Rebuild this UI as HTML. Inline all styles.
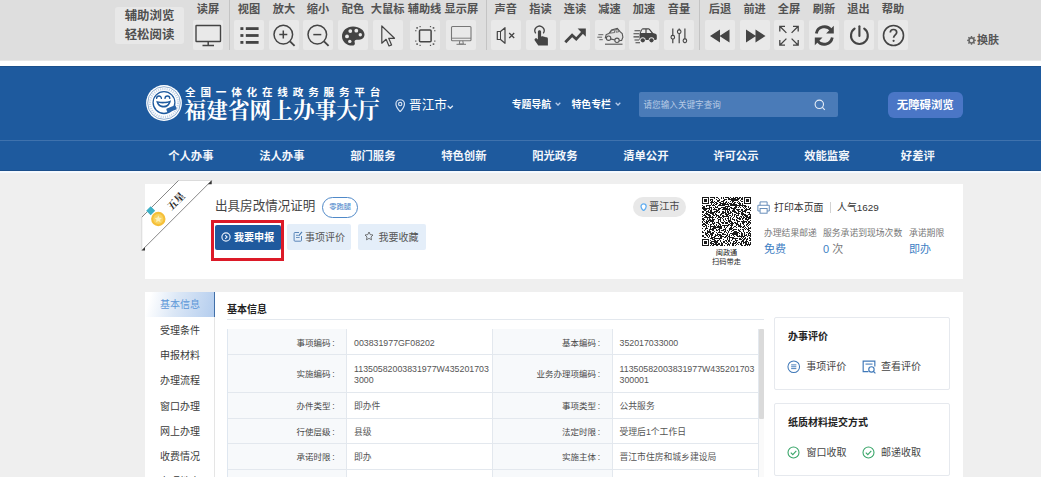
<!DOCTYPE html>
<html lang="zh-CN">
<head>
<meta charset="utf-8">
<title>出具房改情况证明 - 福建省网上办事大厅</title>
<style>
*{box-sizing:border-box;margin:0;padding:0}
html,body{width:1041px;height:477px;overflow:hidden;background:#efefef;font-family:"Liberation Sans","Noto Sans CJK SC",sans-serif;color:#333}
.abs{position:absolute}
#page{position:relative;width:1041px;height:477px;overflow:hidden}
/* ---------- accessibility toolbar ---------- */
#tb{position:absolute;left:0;top:0;width:1041px;height:61px;background:linear-gradient(to bottom,#dedede 0,#dedede 60.2px,#fff 61.2px)}
#tbw{position:absolute;left:0;top:61px;width:1041px;height:6px;background:#fff}
.tbbox{position:absolute;left:115px;top:7px;width:69px;height:37px;background:#e8e8e8;border-radius:3px;font-size:12.400px;font-weight:bold;color:#505050;text-align:center;line-height:19px;padding-top:0}
.tl{position:absolute;top:1.8px;width:50px;margin-left:-25px;text-align:center;font-size:11.2px;font-weight:bold;color:#525252;line-height:15px;white-space:nowrap}
.tbn{position:absolute;top:20.300px;width:30px;height:29.500px;margin-left:-15px;background:#e9e9e9;border-radius:2px}
.tbn svg{position:absolute;left:0;top:0.200px;width:30px;height:30px}
.tsep{position:absolute;top:0;width:1px;height:50px;background:#c4c4c4}
.skin{position:absolute;left:977px;top:33px;font-size:11px;font-weight:bold;color:#555;line-height:15px;white-space:nowrap}
/* ---------- header ---------- */
#hd{position:absolute;left:0;top:66px;width:1041px;height:105px;background:#1e5a9e}
#hdline{position:absolute;left:0;top:73.6px;width:1041px;height:1px;background:#3f72ad}
.logo{position:absolute;left:146px;top:18px;width:35px;height:35px}
.t1{position:absolute;left:185px;top:19.8px;font-size:10.6px;font-weight:bold;color:#fff;line-height:13px;white-space:nowrap}
.t2{position:absolute;left:184px;top:31px;font-family:"Liberation Serif","Noto Serif CJK SC",serif;font-size:21.6px;font-weight:bold;color:#fff;line-height:24px;white-space:nowrap;letter-spacing:0.1px}
.loc{position:absolute;left:409px;top:30.400px;font-size:12.650px;color:#fff;line-height:18px;white-space:nowrap}
.hn{position:absolute;top:31px;font-size:9.850px;font-weight:bold;color:#fff;line-height:16px;white-space:nowrap}
.sbox{position:absolute;left:639px;top:26.300px;width:198.500px;height:25.200px;background:#4a7bb8;border-radius:2px}
.sbox span{position:absolute;left:4.500px;top:5.500px;font-size:8.6px;color:#b9cce6;line-height:14px;white-space:nowrap}
.wza{position:absolute;left:887.500px;top:25.500px;width:75.500px;height:26.800px;background:#4a76c6;border-radius:6px;color:#fff;font-size:11.4px;font-weight:bold;text-align:center;line-height:27px;white-space:nowrap}
.nv{position:absolute;top:81px;width:80px;margin-left:-39.200px;text-align:center;font-size:11.350px;font-weight:bold;color:#f3f6fb;line-height:18px;white-space:nowrap}
/* ---------- cards ---------- */
#c1{position:absolute;left:145px;top:184px;width:817.800px;height:95px;background:#fff}
#c2{position:absolute;left:145px;top:292px;width:817.800px;height:200px;background:#fff}
.ttl{position:absolute;left:215px;top:197px;font-size:12.550px;color:#444;line-height:18px;white-space:nowrap}
.pill{position:absolute;left:322px;top:197.400px;width:36.300px;height:20.300px;border:1px solid #5089c8;border-radius:10.500px;color:#3f80c8;font-size:7.300px;text-align:center;line-height:18.600px;white-space:nowrap}
.red{position:absolute;left:211px;top:219.500px;width:73.200px;height:41.500px;border:3px solid #dc1a28}
.b1{position:absolute;left:215px;top:224.500px;width:65.800px;height:25px;background:#1f5a9e;border-radius:2px;color:#fff;font-size:10.050px;font-weight:bold;line-height:26px;white-space:nowrap}
.b2{position:absolute;top:224px;height:26px;background:#e4eef9;border-radius:2px;color:#555;font-size:10px;line-height:27.400px;white-space:nowrap}
.lp{position:absolute;left:632.500px;top:196.600px;width:53px;height:20px;background:#e8e8e8;border-radius:10px;color:#484848;font-size:10.200px;line-height:20.400px;white-space:nowrap}
.sm{position:absolute;font-size:8.8px;color:#777;line-height:12px;white-space:nowrap}
.val{position:absolute;font-size:11px;color:#4080c4;line-height:14px;white-space:nowrap}
.pr{position:absolute;top:201px;font-size:9.900px;color:#333;line-height:14px;white-space:nowrap}
.qt{position:absolute;left:696.500px;width:60px;text-align:center;font-size:7.200px;color:#1c1c1c;line-height:8px;white-space:nowrap}
/* sidebar */
.sd{position:absolute;left:145px;width:68px;height:25px;font-size:10px;color:#3a3a3a;line-height:25px;padding-left:15px;white-space:nowrap}
.sd.on{background:linear-gradient(105deg,#fff 8%,#dbe7f6 45%,#b4cdee 100%);border-right:1.400px solid #416fa8;color:#5b96d8;height:24.600px;line-height:26px;width:69.500px}
.vline{position:absolute;left:213.500px;top:292px;width:1px;height:186px;background:#e5e5e5}
.h3{position:absolute;font-size:10px;font-weight:bold;color:#222;line-height:14px;white-space:nowrap}
/* table */
.tc{position:absolute;border-right:1px solid #e3e8ee;border-bottom:1px solid #e3e8ee;font-size:8.8px;color:#555;line-height:11px;display:flex;align-items:center}
.tc.l{background:#f7f9fb;justify-content:flex-end;padding-right:11.500px;padding-top:3px;color:#484848;font-size:8.500px;white-space:nowrap}
.tc.v{background:#fff;padding-left:7px;padding-right:0;padding-top:3px;font-size:8.800px;white-space:nowrap}
.bx{position:absolute;left:774px;width:176px;border:1px solid #e6e9ee;border-radius:2px;background:#fff}
.it{position:absolute;font-size:10px;color:#444;line-height:14px;white-space:nowrap}
</style>
</head>
<body>
<div id="page">

<!-- ================= toolbar ================= -->
<div id="tb">
  <div class="tbbox">辅助浏览<br>轻松阅读</div>
  <!--TB-->
  <div class="tl" style="left:208px">读屏</div><div class="tbn" style="left:208px"><svg viewBox="0 0 30 30"><rect x="3" y="5.5" width="24.5" height="16" rx="0.5" stroke="#444" fill="none" stroke-width="1.4"/><path d="M15.2 21.5v3.6M9.5 25.4h11.5" stroke="#444" fill="none" stroke-width="1.5"/></svg></div>
  <div class="tl" style="left:249px">视图</div><div class="tbn" style="left:249px"><svg viewBox="0 0 30 30"><g fill="#444"><rect x="6.400" y="7.200" width="3" height="2.800"/><rect x="6.400" y="14.100" width="3" height="2.800"/><rect x="6.400" y="21" width="3" height="2.800"/><rect x="11.800" y="7.200" width="12.800" height="2.800"/><rect x="11.800" y="14.100" width="12.800" height="2.800"/><rect x="11.800" y="21" width="12.800" height="2.800"/></g></svg></div>
  <div class="tl" style="left:284px">放大</div><div class="tbn" style="left:284px"><svg viewBox="0 0 30 30"><circle cx="14.3" cy="14.6" r="9.3" stroke="#444" fill="none" stroke-width="1.5"/><path d="M21 21.3l4.6 4.6" stroke="#444" fill="none" stroke-width="1.8"/><path d="M10.3 14.6h8M14.3 10.6v8" stroke="#444" fill="none" stroke-width="1.5"/></svg></div>
  <div class="tl" style="left:318px">缩小</div><div class="tbn" style="left:318px"><svg viewBox="0 0 30 30"><circle cx="14.3" cy="14.6" r="9.3" stroke="#444" fill="none" stroke-width="1.5"/><path d="M21 21.3l4.6 4.6" stroke="#444" fill="none" stroke-width="1.8"/><path d="M10.3 14.6h8" stroke="#444" fill="none" stroke-width="1.5"/></svg></div>
  <div class="tl" style="left:353px">配色</div><div class="tbn" style="left:353px"><svg viewBox="0 0 30 30"><g transform="translate(0 0.9)"><path fill="#444" d="M15 5.5C8.8 5.5 4 9.9 4 15.3c0 5.3 4.600 9.400 10.200 9.400 1.800 0 2.700-.9 2.700-2.100 0-.7-.4-1.200-.4-1.900 0-1.100.9-1.900 2.100-1.900h2.600c3.100 0 5.300-2.200 5.300-5.100C26.500 9.100 21.400 5.500 15 5.500z"/><g fill="#e9e9e9"><circle cx="9" cy="15.500" r="1.900"/><circle cx="12.300" cy="10.200" r="1.900"/><circle cx="18.300" cy="9.800" r="1.900"/><circle cx="22.300" cy="13.800" r="1.700"/><circle cx="11.800" cy="20.500" r="1.700"/></g></g></svg></div>
  <div class="tl" style="left:387.6px">大鼠标</div><div class="tbn" style="left:387.6px"><svg viewBox="0 0 30 30"><g transform="translate(0 0.5)"><path d="M8.8 5.5v17.2l4.3-3.9 2.900 6.700 2.600-1.100-2.900-6.600h5.800z" stroke="#444" fill="none" stroke-width="1.2" stroke-linejoin="round"/></g></svg></div>
  <div class="tl" style="left:424.5px">辅助线</div><div class="tbn" style="left:424.5px"><svg viewBox="0 0 30 30"><g transform="translate(0 0.6)"><rect x="9.5" y="9.500" width="11.600" height="11.600" rx="1" stroke="#444" fill="none" stroke-width="1.500"/><g fill="#555"><rect x="6.300" y="6.500" width="1.600" height="1.600"/><rect x="22.700" y="6.500" width="1.600" height="1.600"/><rect x="6.300" y="22.700" width="1.600" height="1.600"/><rect x="22.700" y="22.700" width="1.600" height="1.600"/><rect x="9.500" y="5.400" width="1.200" height="1.200"/><rect x="19.900" y="5.400" width="1.200" height="1.200"/><rect x="9.500" y="24.200" width="1.200" height="1.200"/><rect x="19.900" y="24.200" width="1.200" height="1.200"/><rect x="5.200" y="9.500" width="1.200" height="1.200"/><rect x="5.200" y="19.900" width="1.200" height="1.200"/><rect x="24.200" y="9.500" width="1.200" height="1.200"/><rect x="24.200" y="19.900" width="1.200" height="1.200"/></g></g></svg></div>
  <div class="tl" style="left:461.4px">显示屏</div><div class="tbn" style="left:461.4px"><svg viewBox="0 0 30 30"><rect x="5.500" y="6.500" width="19.500" height="14.300" rx="1" stroke="#777" fill="none" stroke-width="1.100"/><path d="M5.500 18.200h19.500" stroke="#777" stroke-width="0.900"/><path d="M13.800 20.800l-.5 3.200h4l-.5-3.200M10.500 24.300h9.500" stroke="#777" fill="none" stroke-width="1"/></svg></div>
  <div class="tl" style="left:505.7px">声音</div><div class="tbn" style="left:505.7px"><svg viewBox="0 0 30 30"><path d="M6.300 11.500h3.200l4.500-3.800v15.600l-4.500-3.800H6.300z" stroke="#444" fill="none" stroke-width="1.200" stroke-linejoin="round"/><path d="M9.500 11.500v8" stroke="#444" fill="none" stroke-width="1"/><path d="M18.200 13l5 5M23.200 13l-5 5" stroke="#444" fill="none" stroke-width="1.300"/></svg></div>
  <div class="tl" style="left:540.5px">指读</div><div class="tbn" style="left:540.5px"><svg viewBox="0 0 30 30"><path fill="#444" d="M13.500 10.200c.9 0 1.600.7 1.600 1.600v4.600l1.200-.1c.7-.3 1.500 0 1.800.6.600-.4 1.500-.2 1.900.5.700-.3 1.600.1 1.800.9l.1 1v6.200h-9.600l-3.500-5c-.5-.7-.3-1.600.4-2 .6-.400 1.400-.3 1.900.2l.8.9v-7.800c0-.9.700-1.600 1.600-1.600z"/><path d="M9.700 13.400a4.600 4.600 0 1 1 7.600 0" stroke="#444" fill="none" stroke-width="1.300"/></svg></div>
  <div class="tl" style="left:575px">连读</div><div class="tbn" style="left:575px"><svg viewBox="0 0 30 30"><path d="M5.300 22.300l6.800-7 4.100 3.800 6.500-7" stroke="#444" fill="none" stroke-width="2.800" stroke-linejoin="miter"/><path fill="#444" d="M17.600 8.500h8.200v8.200z"/></svg></div>
  <div class="tl" style="left:609.5px">减速</div><div class="tbn" style="left:609.5px"><svg viewBox="0 0 30 30"><g stroke="#555" fill="none" stroke-width="1.100"><path fill="#e2e2e2" d="M10.300 17.800l.9-3.200 2.700-1 2.600-3.700 5.800-1.500 3 3.500 1.900 1.600.7 3.600-1.300 3.300-3.200.4-8.200-1.900z"/><path d="M14.800 13.200l2-2.800 2.300-.6.700 2.700zM20.700 9.500l1.300-.3 2 2.400-2.600.7z" stroke-width="0.800"/><circle cx="13.600" cy="18.200" r="2.200" fill="#e9e9e9"/><circle cx="22" cy="20.300" r="2.200" fill="#e9e9e9"/><path d="M10 24.200h17.500"/><path d="M3.300 14.700h5M2.300 17.200h4.800M4.300 19.700h3.500" stroke-width="0.900"/></g></svg></div>
  <div class="tl" style="left:644px">加速</div><div class="tbn" style="left:644px"><svg viewBox="0 0 30 30"><path fill="#444" d="M10.500 13.300l2-4.100c.3-.6.900-1 1.600-1h5.300c.6 0 1.100.2 1.500.7l3.200 4 2.300.8c.9.3 1.400 1.100 1.400 2v3.100c0 .7-.5 1.200-1.200 1.200h-1.300a2.800 2.800 0 0 0-5.600 0h-3.100a2.800 2.800 0 0 0-5.600 0h-.5z"/><g fill="#444"><circle cx="13.800" cy="20.300" r="2.100"/><circle cx="22.500" cy="20.300" r="2.100"/></g><path fill="#e9e9e9" d="M13.300 9.500h3.100v3.500h-4.700zM17.600 9.500h2.200l2.700 3.500h-4.900z"/><path d="M5.500 10.700h6M4.500 13.800h5.500M4.500 16.900h5.500M5.500 20h4.500M6.500 22.800h4.500" stroke="#444" stroke-width="1.100" fill="none"/></svg></div>
  <div class="tl" style="left:679px">音量</div><div class="tbn" style="left:679px"><svg viewBox="0 0 30 30"><path d="M8.800 8.500v6.900M8.800 19.100v4.100M15.200 8.500v1.400M15.200 13.600v9.600M20.900 8.500v10.400M20.900 22.600v.6" stroke="#444" fill="none" stroke-width="1.200"/><circle cx="8.800" cy="17.200" r="1.800" stroke="#444" fill="none" stroke-width="1.100"/><circle cx="15.200" cy="11.700" r="1.800" stroke="#444" fill="none" stroke-width="1.100"/><circle cx="20.900" cy="20.700" r="1.800" stroke="#444" fill="none" stroke-width="1.100"/></svg></div>
  <div class="tl" style="left:720px">后退</div><div class="tbn" style="left:720px"><svg viewBox="0 0 30 30"><path fill="#444" d="M5 16l10-6.400v12.800zM14.500 16l10-6.400v12.800z"/></svg></div>
  <div class="tl" style="left:754.6px">前进</div><div class="tbn" style="left:754.6px"><svg viewBox="0 0 30 30"><path fill="#444" d="M25.500 16l-10 -6.400v12.800zM16 16l-10-6.400v12.800z"/></svg></div>
  <div class="tl" style="left:789px">全屏</div><div class="tbn" style="left:789px"><svg viewBox="0 0 30 30"><path d="M5.800 6.300l6.600 6.600M5.800 11.500V6.300H11M24.200 6.300l-6.600 6.600M19 6.300h5.200v5.200M5.800 25.200l6.600-6.600M5.800 20v5.200H11M24.200 25.200l-6.600-6.600M19 25.200h5.200V20" stroke="#444" fill="none" stroke-width="1.300"/></svg></div>
  <div class="tl" style="left:824px">刷新</div><div class="tbn" style="left:824px"><svg viewBox="0 0 30 30"><path d="M7.300 13.500a8.200 8.200 0 0 1 14.800-3.200M23.300 17.500a8.200 8.200 0 0 1-14.800 3.200" stroke="#444" fill="none" stroke-width="2.800"/><path fill="#444" d="M24.800 5.800v7.700h-7.700zM5.800 25.200v-7.700h7.700z"/></svg></div>
  <div class="tl" style="left:858.5px">退出</div><div class="tbn" style="left:858.5px"><svg viewBox="0 0 30 30"><path d="M10.600 8.700A8.400 8.400 0 1 0 20.200 8.700" stroke="#444" fill="none" stroke-width="2.100" stroke-linecap="round"/><path d="M15.400 6.300V16" stroke="#444" stroke-width="2.100" stroke-linecap="round"/></svg></div>
  <div class="tl" style="left:893px">帮助</div><div class="tbn" style="left:893px"><svg viewBox="0 0 30 30"><circle cx="15.500" cy="15.500" r="10" stroke="#444" fill="none" stroke-width="1.600"/><path d="M12.300 12.600c0-1.900 1.400-3.100 3.200-3.100s3.200 1.200 3.200 2.900c0 2.400-3.100 2.500-3.100 5.300" stroke="#444" fill="none" stroke-width="1.700"/><circle cx="15.600" cy="20.800" r="1.100" fill="#444"/></svg></div>
  <div class="tsep" style="left:228.5px"></div>
  <div class="tsep" style="left:485.5px"></div>
  <div class="tsep" style="left:699.3px"></div>
  <!--/TB-->
  <svg class="abs" viewBox="0 0 20 20" style="left:967px;top:36px;width:9px;height:9px"><path fill="#666" d="M10 6.200a3.800 3.800 0 1 0 0 7.600 3.800 3.800 0 0 0 0-7.600zM8.600 0h2.800l.5 2.700 1.700.7L15.900 1.800l2 2-1.600 2.300.7 1.700 2.700.5v2.800l-2.700.5-.7 1.700 1.600 2.300-2 2-2.300-1.600-1.700.7-.5 2.700H8.600l-.5-2.700-1.700-.7-2.300 1.600-2-2 1.600-2.300-.7-1.700L.3 11.100V8.300L3 7.800l.7-1.700L2.100 3.800l2-2 2.300 1.600 1.700-.7z" fill-rule="evenodd"/></svg>
  <div class="skin">换肤</div>
</div>
<div id="tbw"></div>

<!-- ================= header ================= -->
<div id="hd">
  <div class="abs" style="left:0;top:0;width:1041px;height:1px;background:#1a508c"></div>
  <div id="hdline"></div>
  <div class="abs" style="left:0;top:104px;width:1041px;height:1px;background:#1b4f8b"></div>
  <div class="abs" style="left:0;top:105px;width:1041px;height:2px;background:#f5f9fe"></div>
  <div class="t1" style="letter-spacing:4.8px">全国一体化在线政务服务平台</div>
  <svg class="logo" viewBox="0 0 36 36" style="left:146.2px;top:18.5px;width:36px;height:36px">
<circle cx="18" cy="18" r="17.9" fill="#fff"/>
<circle cx="18" cy="18" r="16.3" fill="none" stroke="#1f5a9e" stroke-width="0.5"/>
<circle cx="18" cy="18" r="14" fill="none" stroke="#c3d3e8" stroke-width="2.200" stroke-dasharray="1.100 1.100"/>
<circle cx="18" cy="17.6" r="10.9" fill="#fff" stroke="#1f5a9e" stroke-width="1.3"/>
<path d="M10.600 13.400a2.400 2.400 0 0 1 4.800 0M19 13.400a2.400 2.400 0 0 1 4.800 0" fill="none" stroke="#1f5a9e" stroke-width="1.300" stroke-linecap="round"/>
<path d="M10.300 15.800c2.200 1.500 11.800 1.500 14.600-.6-.4 4.600-3.500 7.400-7.300 7.400-3.900 0-6.800-2.800-7.300-6.800z" fill="#1f5a9e"/>
<path d="M12.400 17.800c2.600.9 7.600.8 10.300-.3-.9 2.100-2.900 3.300-5.200 3.300-2.300 0-4.200-1.200-5.100-3z" fill="#fff"/>
<rect x="20.500" y="21.800" width="10" height="4.300" rx="1" fill="#2a64a8" transform="rotate(-22 25.500 24)"/>
</svg>
<div class="t2" style="left:184.500px;top:32.600px">福建省网上办事大厅</div>
  <svg class="abs" viewBox="0 0 10 13" style="left:395.300px;top:32.800px;width:10.400px;height:13.500px"><path d="M5 .7a4.100 4.100 0 0 0-4.100 4.100c0 3 4.100 7.400 4.100 7.400s4.100-4.400 4.100-7.400A4.100 4.100 0 0 0 5 .7z" fill="none" stroke="#d6e2f3" stroke-width="1.150"/><circle cx="5" cy="4.900" r="1.600" fill="none" stroke="#d6e2f3" stroke-width="1.100"/></svg>
<svg class="abs" viewBox="0 0 7 5" style="left:447px;top:38.800px;width:6.600px;height:4.700px"><path d="M.8.800l2.700 2.700L6.200.8" fill="none" stroke="#dfe8f4" stroke-width="1.400"/></svg>
<svg class="abs" viewBox="0 0 7 5" style="left:555px;top:36px;width:6px;height:4.300px"><path d="M.8.800l2.700 2.700L6.200.8" fill="none" stroke="#b3c9e8" stroke-width="1.500"/></svg>
<svg class="abs" viewBox="0 0 7 5" style="left:614.500px;top:36px;width:6px;height:4.300px"><path d="M.8.800l2.700 2.700L6.200.8" fill="none" stroke="#b3c9e8" stroke-width="1.500"/></svg>

  <div class="loc">晋江市</div>
  <div class="hn" style="left:511.700px">专题导航</div>
  <div class="hn" style="left:571.500px">特色专栏</div>
  <div class="sbox"><span>请您输入关键字查询</span></div>
  <svg class="abs" viewBox="0 0 12 12" style="left:813.500px;top:33px;width:12px;height:12px"><circle cx="5.300" cy="5.300" r="4.200" fill="none" stroke="#e8eff8" stroke-width="1.100"/><path d="M8.400 8.400l2.400 2.400" stroke="#e8eff8" stroke-width="1.100"/></svg>
  <div class="wza">无障碍浏览</div>
  <div class="nv" style="left:190px">个人办事</div>
  <div class="nv" style="left:281px">法人办事</div>
  <div class="nv" style="left:372px">部门服务</div>
  <div class="nv" style="left:463px">特色创新</div>
  <div class="nv" style="left:554px">阳光政务</div>
  <div class="nv" style="left:645px">清单公开</div>
  <div class="nv" style="left:735px">许可公示</div>
  <div class="nv" style="left:826px">效能监察</div>
  <div class="nv" style="left:917px">好差评</div>
</div>

<!-- ================= card 1 ================= -->
<div id="c1"></div>
<svg class="abs" viewBox="0 0 76 76" style="left:140px;top:178px;width:76px;height:76px">
<path d="M38.500 2.500H71.700L1.800 72.400V39.200z" fill="#fff"/>
<path d="M38.500 2.500H71.500M1.800 39.200V72.200" fill="none" stroke="#cfcfcf" stroke-width="0.700"/>
<path d="M1.800 39.200L38.500 2.500M71.700 2.500L1.800 72.400" fill="none" stroke="#555" stroke-width="0.700"/>
<path d="M67.900 6.300h3.800V2.500zM5 69.200v3.200H1.800z" fill="#333"/>
<path d="M15.200 32.700l-4.500 4.500-4.500-4.500 4.500-4.500z" fill="#3db0c6"/>
<circle cx="18.300" cy="41" r="7.200" fill="#f5bf38"/><circle cx="18.300" cy="41" r="5.100" fill="#f9d35e"/>
<path d="M18.300 37.400l1.100 2.300 2.500.3-1.800 1.800.4 2.500-2.200-1.200-2.200 1.200.4-2.500-1.800-1.800 2.500-.3z" fill="#fdf0b8"/>
<g transform="translate(35.900 23) rotate(-45) translate(-10.100 -4.900)"><text x="0" y="8.700" font-size="10" font-weight="bold" fill="#222" font-family="'Liberation Serif','Noto Serif CJK SC',serif">五星</text></g>
</svg>
<div class="ttl">出具房改情况证明</div>
<div class="pill">零跑腿</div>
<div class="red"></div>
<div class="b1"><span style="margin-left:19px">我要申报</span></div>
<div class="b2" style="left:287px;width:64px"><span style="margin-left:18px">事项评价</span></div>
<div class="b2" style="left:358px;width:68px"><span style="margin-left:20.600px">我要收藏</span></div>
<svg class="abs" viewBox="0 0 10 10" style="left:220.500px;top:232.300px;width:10px;height:10px"><circle cx="5" cy="5" r="4.100" fill="none" stroke="#e8f0fa" stroke-width="1.150"/><path d="M4.200 3.100l1.900 1.900-1.900 1.900" fill="none" stroke="#e8f0fa" stroke-width="1.150"/></svg>
<svg class="abs" viewBox="0 0 10 11" style="left:292.500px;top:231.300px;width:10px;height:11px"><path d="M6 1.500H2a.9.900 0 0 0-.9.900v6.900a.9.900 0 0 0 .9.900h5.600a.9.900 0 0 0 .9-.9V5" fill="none" stroke="#4c7cb2" stroke-width="0.900"/><path d="M3 4.300h2.300M3 6.500h3.600" stroke="#4c7cb2" stroke-width="0.800"/><path d="M5.700 4.800L9 .9" stroke="#4c7cb2" stroke-width="1.100"/></svg>
<svg class="abs" viewBox="0 0 10 10" style="left:364.400px;top:231.300px;width:10px;height:10px"><path d="M5 1l1.200 2.600 2.800.4-2 2 .5 2.800L5 7.400 2.500 8.800 3 6 1 4l2.800-.4z" fill="none" stroke="#555" stroke-width="0.800" stroke-linejoin="round"/></svg>

<div class="lp"><span style="margin-left:16.500px">晋江市</span></div>
<svg class="abs" viewBox="0 0 8 10" style="left:640.200px;top:202.500px;width:7.200px;height:8.600px"><path d="M4 1A3 3 0 0 0 1 4c0 2.200 3 5 3 5s3-2.800 3-5A3 3 0 0 0 4 1z" fill="#fff" stroke="#62aef0" stroke-width="1.500"/></svg>
<svg class="abs" viewBox="0 0 49 49" style="left:702px;top:197px;width:49px;height:49.500px" shape-rendering="crispEdges"><rect width="49" height="49" fill="#fff"/><path fill="#1a1a1a" d="M0 0h7v1h-7zM8 0h5v1h-5zM14 0h2v1h-2zM19 0h1v1h-1zM21 0h1v1h-1zM23 0h4v1h-4zM28 0h1v1h-1zM31 0h1v1h-1zM33 0h3v1h-3zM37 0h2v1h-2zM40 0h1v1h-1zM42 0h7v1h-7zM0 1h1v1h-1zM6 1h1v1h-1zM12 1h1v1h-1zM16 1h1v1h-1zM19 1h1v1h-1zM21 1h1v1h-1zM26 1h2v1h-2zM29 1h5v1h-5zM35 1h3v1h-3zM39 1h2v1h-2zM42 1h1v1h-1zM48 1h1v1h-1zM0 2h1v1h-1zM2 2h3v1h-3zM6 2h1v1h-1zM8 2h3v1h-3zM14 2h1v1h-1zM17 2h1v1h-1zM22 2h3v1h-3zM26 2h11v1h-11zM39 2h2v1h-2zM42 2h1v1h-1zM44 2h3v1h-3zM48 2h1v1h-1zM0 3h1v1h-1zM2 3h3v1h-3zM6 3h1v1h-1zM8 3h1v1h-1zM10 3h1v1h-1zM15 3h3v1h-3zM21 3h2v1h-2zM29 3h7v1h-7zM38 3h1v1h-1zM42 3h1v1h-1zM44 3h3v1h-3zM48 3h1v1h-1zM0 4h1v1h-1zM2 4h3v1h-3zM6 4h1v1h-1zM9 4h2v1h-2zM12 4h1v1h-1zM15 4h2v1h-2zM19 4h3v1h-3zM24 4h1v1h-1zM28 4h1v1h-1zM30 4h2v1h-2zM36 4h1v1h-1zM39 4h2v1h-2zM42 4h1v1h-1zM44 4h3v1h-3zM48 4h1v1h-1zM0 5h1v1h-1zM6 5h1v1h-1zM8 5h4v1h-4zM13 5h2v1h-2zM17 5h2v1h-2zM21 5h1v1h-1zM23 5h2v1h-2zM26 5h1v1h-1zM30 5h1v1h-1zM32 5h2v1h-2zM35 5h1v1h-1zM37 5h1v1h-1zM42 5h1v1h-1zM48 5h1v1h-1zM0 6h7v1h-7zM9 6h1v1h-1zM12 6h1v1h-1zM14 6h2v1h-2zM18 6h6v1h-6zM25 6h1v1h-1zM27 6h3v1h-3zM31 6h2v1h-2zM36 6h3v1h-3zM40 6h1v1h-1zM42 6h7v1h-7zM9 7h1v1h-1zM11 7h1v1h-1zM13 7h2v1h-2zM17 7h2v1h-2zM20 7h7v1h-7zM28 7h7v1h-7zM37 7h2v1h-2zM40 7h1v1h-1zM0 8h1v1h-1zM4 8h5v1h-5zM10 8h3v1h-3zM16 8h7v1h-7zM26 8h1v1h-1zM28 8h16v1h-16zM1 9h2v1h-2zM4 9h1v1h-1zM7 9h1v1h-1zM13 9h1v1h-1zM15 9h1v1h-1zM23 9h5v1h-5zM33 9h2v1h-2zM37 9h1v1h-1zM40 9h1v1h-1zM42 9h3v1h-3zM46 9h1v1h-1zM0 10h3v1h-3zM7 10h3v1h-3zM11 10h1v1h-1zM13 10h3v1h-3zM19 10h5v1h-5zM25 10h1v1h-1zM28 10h2v1h-2zM32 10h3v1h-3zM36 10h1v1h-1zM38 10h1v1h-1zM41 10h1v1h-1zM43 10h1v1h-1zM46 10h1v1h-1zM48 10h1v1h-1zM0 11h8v1h-8zM9 11h1v1h-1zM12 11h1v1h-1zM16 11h3v1h-3zM21 11h5v1h-5zM27 11h1v1h-1zM29 11h5v1h-5zM42 11h1v1h-1zM44 11h1v1h-1zM47 11h2v1h-2zM1 12h4v1h-4zM7 12h1v1h-1zM9 12h1v1h-1zM11 12h4v1h-4zM16 12h2v1h-2zM20 12h8v1h-8zM31 12h2v1h-2zM34 12h4v1h-4zM39 12h2v1h-2zM43 12h5v1h-5zM2 13h2v1h-2zM6 13h1v1h-1zM8 13h2v1h-2zM14 13h3v1h-3zM23 13h1v1h-1zM25 13h1v1h-1zM27 13h1v1h-1zM30 13h3v1h-3zM35 13h2v1h-2zM39 13h2v1h-2zM42 13h3v1h-3zM48 13h1v1h-1zM0 14h2v1h-2zM4 14h3v1h-3zM8 14h2v1h-2zM12 14h4v1h-4zM17 14h1v1h-1zM20 14h2v1h-2zM23 14h1v1h-1zM25 14h2v1h-2zM28 14h1v1h-1zM30 14h4v1h-4zM36 14h3v1h-3zM40 14h4v1h-4zM0 15h2v1h-2zM4 15h1v1h-1zM6 15h7v1h-7zM14 15h1v1h-1zM16 15h2v1h-2zM20 15h4v1h-4zM25 15h2v1h-2zM28 15h2v1h-2zM32 15h3v1h-3zM36 15h1v1h-1zM39 15h2v1h-2zM43 15h1v1h-1zM45 15h3v1h-3zM3 16h3v1h-3zM8 16h4v1h-4zM13 16h1v1h-1zM19 16h3v1h-3zM23 16h2v1h-2zM26 16h3v1h-3zM30 16h1v1h-1zM34 16h4v1h-4zM39 16h3v1h-3zM47 16h1v1h-1zM0 17h1v1h-1zM2 17h1v1h-1zM4 17h4v1h-4zM10 17h2v1h-2zM13 17h2v1h-2zM18 17h2v1h-2zM23 17h4v1h-4zM30 17h1v1h-1zM32 17h2v1h-2zM36 17h1v1h-1zM39 17h5v1h-5zM46 17h3v1h-3zM1 18h3v1h-3zM6 18h3v1h-3zM11 18h2v1h-2zM14 18h3v1h-3zM18 18h1v1h-1zM20 18h2v1h-2zM24 18h2v1h-2zM27 18h2v1h-2zM30 18h1v1h-1zM32 18h1v1h-1zM34 18h3v1h-3zM40 18h1v1h-1zM42 18h4v1h-4zM48 18h1v1h-1zM0 19h1v1h-1zM3 19h2v1h-2zM7 19h2v1h-2zM10 19h1v1h-1zM14 19h1v1h-1zM16 19h2v1h-2zM20 19h7v1h-7zM29 19h1v1h-1zM32 19h1v1h-1zM34 19h1v1h-1zM38 19h2v1h-2zM41 19h1v1h-1zM43 19h3v1h-3zM47 19h2v1h-2zM2 20h10v1h-10zM13 20h1v1h-1zM16 20h4v1h-4zM21 20h1v1h-1zM26 20h1v1h-1zM28 20h1v1h-1zM31 20h1v1h-1zM34 20h2v1h-2zM37 20h1v1h-1zM39 20h1v1h-1zM41 20h2v1h-2zM44 20h5v1h-5zM0 21h2v1h-2zM5 21h1v1h-1zM7 21h1v1h-1zM10 21h1v1h-1zM15 21h1v1h-1zM18 21h1v1h-1zM20 21h1v1h-1zM23 21h1v1h-1zM25 21h2v1h-2zM28 21h1v1h-1zM30 21h1v1h-1zM35 21h4v1h-4zM40 21h2v1h-2zM43 21h2v1h-2zM46 21h3v1h-3zM0 22h3v1h-3zM5 22h1v1h-1zM7 22h2v1h-2zM10 22h3v1h-3zM16 22h3v1h-3zM21 22h1v1h-1zM23 22h1v1h-1zM26 22h1v1h-1zM28 22h1v1h-1zM30 22h3v1h-3zM34 22h1v1h-1zM37 22h2v1h-2zM40 22h1v1h-1zM43 22h4v1h-4zM1 23h1v1h-1zM4 23h1v1h-1zM6 23h6v1h-6zM16 23h1v1h-1zM18 23h1v1h-1zM21 23h1v1h-1zM24 23h1v1h-1zM26 23h3v1h-3zM32 23h1v1h-1zM34 23h2v1h-2zM41 23h1v1h-1zM45 23h1v1h-1zM48 23h1v1h-1zM0 24h1v1h-1zM2 24h1v1h-1zM4 24h3v1h-3zM8 24h4v1h-4zM16 24h1v1h-1zM18 24h1v1h-1zM22 24h1v1h-1zM26 24h4v1h-4zM35 24h3v1h-3zM39 24h6v1h-6zM46 24h2v1h-2zM0 25h1v1h-1zM3 25h3v1h-3zM7 25h1v1h-1zM10 25h1v1h-1zM12 25h1v1h-1zM14 25h3v1h-3zM19 25h3v1h-3zM23 25h3v1h-3zM27 25h1v1h-1zM29 25h2v1h-2zM32 25h2v1h-2zM35 25h1v1h-1zM40 25h3v1h-3zM44 25h1v1h-1zM46 25h3v1h-3zM1 26h2v1h-2zM4 26h2v1h-2zM10 26h3v1h-3zM16 26h2v1h-2zM20 26h2v1h-2zM23 26h3v1h-3zM28 26h4v1h-4zM33 26h3v1h-3zM38 26h1v1h-1zM40 26h2v1h-2zM45 26h2v1h-2zM48 26h1v1h-1zM0 27h4v1h-4zM6 27h1v1h-1zM8 27h2v1h-2zM11 27h1v1h-1zM14 27h1v1h-1zM17 27h2v1h-2zM26 27h2v1h-2zM29 27h2v1h-2zM34 27h3v1h-3zM38 27h1v1h-1zM41 27h1v1h-1zM44 27h2v1h-2zM47 27h1v1h-1zM0 28h1v1h-1zM3 28h2v1h-2zM8 28h1v1h-1zM12 28h1v1h-1zM14 28h1v1h-1zM16 28h1v1h-1zM18 28h1v1h-1zM20 28h7v1h-7zM28 28h3v1h-3zM34 28h1v1h-1zM36 28h3v1h-3zM42 28h1v1h-1zM44 28h1v1h-1zM46 28h1v1h-1zM1 29h2v1h-2zM4 29h1v1h-1zM6 29h1v1h-1zM8 29h6v1h-6zM15 29h5v1h-5zM22 29h1v1h-1zM25 29h1v1h-1zM29 29h1v1h-1zM32 29h2v1h-2zM36 29h4v1h-4zM41 29h2v1h-2zM45 29h1v1h-1zM4 30h1v1h-1zM8 30h1v1h-1zM11 30h9v1h-9zM22 30h1v1h-1zM24 30h1v1h-1zM28 30h2v1h-2zM31 30h1v1h-1zM34 30h1v1h-1zM38 30h1v1h-1zM40 30h2v1h-2zM43 30h1v1h-1zM46 30h1v1h-1zM48 30h1v1h-1zM0 31h1v1h-1zM3 31h3v1h-3zM8 31h1v1h-1zM10 31h4v1h-4zM17 31h3v1h-3zM23 31h1v1h-1zM27 31h4v1h-4zM42 31h1v1h-1zM44 31h1v1h-1zM46 31h3v1h-3zM3 32h1v1h-1zM7 32h5v1h-5zM14 32h1v1h-1zM16 32h2v1h-2zM21 32h3v1h-3zM27 32h3v1h-3zM31 32h4v1h-4zM36 32h1v1h-1zM38 32h1v1h-1zM40 32h2v1h-2zM43 32h1v1h-1zM45 32h2v1h-2zM2 33h1v1h-1zM5 33h1v1h-1zM7 33h1v1h-1zM10 33h2v1h-2zM14 33h2v1h-2zM17 33h1v1h-1zM19 33h3v1h-3zM23 33h1v1h-1zM25 33h1v1h-1zM27 33h1v1h-1zM30 33h2v1h-2zM36 33h2v1h-2zM41 33h1v1h-1zM46 33h2v1h-2zM0 34h1v1h-1zM5 34h4v1h-4zM12 34h1v1h-1zM17 34h1v1h-1zM22 34h2v1h-2zM26 34h1v1h-1zM29 34h1v1h-1zM32 34h3v1h-3zM37 34h2v1h-2zM41 34h1v1h-1zM46 34h1v1h-1zM48 34h1v1h-1zM0 35h2v1h-2zM3 35h1v1h-1zM5 35h4v1h-4zM10 35h2v1h-2zM14 35h1v1h-1zM16 35h4v1h-4zM22 35h1v1h-1zM24 35h1v1h-1zM26 35h1v1h-1zM31 35h6v1h-6zM39 35h1v1h-1zM42 35h1v1h-1zM44 35h2v1h-2zM47 35h1v1h-1zM3 36h3v1h-3zM8 36h4v1h-4zM15 36h1v1h-1zM20 36h2v1h-2zM25 36h1v1h-1zM28 36h8v1h-8zM37 36h1v1h-1zM39 36h2v1h-2zM42 36h1v1h-1zM46 36h3v1h-3zM3 37h2v1h-2zM6 37h1v1h-1zM8 37h3v1h-3zM13 37h1v1h-1zM15 37h4v1h-4zM20 37h4v1h-4zM25 37h1v1h-1zM27 37h1v1h-1zM30 37h6v1h-6zM39 37h2v1h-2zM42 37h1v1h-1zM44 37h1v1h-1zM46 37h1v1h-1zM48 37h1v1h-1zM0 38h2v1h-2zM4 38h2v1h-2zM7 38h1v1h-1zM9 38h2v1h-2zM13 38h3v1h-3zM17 38h3v1h-3zM24 38h2v1h-2zM27 38h1v1h-1zM29 38h1v1h-1zM31 38h1v1h-1zM34 38h2v1h-2zM37 38h1v1h-1zM39 38h2v1h-2zM42 38h3v1h-3zM46 38h3v1h-3zM0 39h2v1h-2zM5 39h1v1h-1zM7 39h1v1h-1zM9 39h1v1h-1zM12 39h2v1h-2zM16 39h1v1h-1zM18 39h4v1h-4zM23 39h2v1h-2zM26 39h2v1h-2zM32 39h1v1h-1zM35 39h8v1h-8zM45 39h1v1h-1zM48 39h1v1h-1zM2 40h2v1h-2zM6 40h1v1h-1zM9 40h4v1h-4zM18 40h2v1h-2zM22 40h2v1h-2zM25 40h1v1h-1zM27 40h5v1h-5zM39 40h1v1h-1zM41 40h1v1h-1zM43 40h1v1h-1zM47 40h1v1h-1zM8 41h3v1h-3zM12 41h8v1h-8zM25 41h1v1h-1zM27 41h1v1h-1zM30 41h6v1h-6zM37 41h2v1h-2zM40 41h1v1h-1zM42 41h2v1h-2zM45 41h1v1h-1zM47 41h2v1h-2zM0 42h7v1h-7zM10 42h3v1h-3zM17 42h1v1h-1zM21 42h1v1h-1zM25 42h1v1h-1zM27 42h1v1h-1zM30 42h1v1h-1zM33 42h1v1h-1zM37 42h3v1h-3zM41 42h2v1h-2zM44 42h2v1h-2zM48 42h1v1h-1zM0 43h1v1h-1zM6 43h1v1h-1zM8 43h1v1h-1zM12 43h2v1h-2zM15 43h2v1h-2zM18 43h1v1h-1zM23 43h2v1h-2zM26 43h2v1h-2zM29 43h1v1h-1zM33 43h3v1h-3zM40 43h2v1h-2zM44 43h1v1h-1zM47 43h2v1h-2zM0 44h1v1h-1zM2 44h3v1h-3zM6 44h1v1h-1zM9 44h7v1h-7zM18 44h1v1h-1zM21 44h2v1h-2zM24 44h1v1h-1zM26 44h2v1h-2zM31 44h2v1h-2zM34 44h1v1h-1zM39 44h3v1h-3zM43 44h3v1h-3zM0 45h1v1h-1zM2 45h3v1h-3zM6 45h1v1h-1zM8 45h2v1h-2zM12 45h4v1h-4zM19 45h1v1h-1zM21 45h2v1h-2zM25 45h1v1h-1zM28 45h1v1h-1zM31 45h1v1h-1zM33 45h2v1h-2zM36 45h2v1h-2zM39 45h1v1h-1zM41 45h4v1h-4zM46 45h1v1h-1zM48 45h1v1h-1zM0 46h1v1h-1zM2 46h3v1h-3zM6 46h1v1h-1zM8 46h4v1h-4zM13 46h2v1h-2zM16 46h2v1h-2zM19 46h2v1h-2zM23 46h2v1h-2zM26 46h1v1h-1zM28 46h1v1h-1zM30 46h4v1h-4zM35 46h1v1h-1zM38 46h2v1h-2zM41 46h1v1h-1zM43 46h2v1h-2zM46 46h1v1h-1zM48 46h1v1h-1zM0 47h1v1h-1zM6 47h1v1h-1zM9 47h1v1h-1zM11 47h7v1h-7zM19 47h2v1h-2zM25 47h3v1h-3zM30 47h2v1h-2zM34 47h1v1h-1zM36 47h1v1h-1zM38 47h2v1h-2zM43 47h6v1h-6zM0 48h7v1h-7zM8 48h1v1h-1zM10 48h2v1h-2zM14 48h2v1h-2zM18 48h3v1h-3zM22 48h1v1h-1zM25 48h1v1h-1zM27 48h1v1h-1zM30 48h2v1h-2zM33 48h1v1h-1zM39 48h2v1h-2zM42 48h2v1h-2zM45 48h1v1h-1zM47 48h1v1h-1z"/></svg>
<div class="qt" style="top:249.200px">闽政通</div>
<div class="qt" style="top:257.500px">扫码带走</div>
<svg class="abs" viewBox="0.500 0.500 12 12" style="left:757.200px;top:200.700px;width:13.200px;height:13.200px"><path d="M3.300 4.300V1.300h6.400v3M3.300 9.600H1.300V4.400h10.400v5.200H9.700" fill="none" stroke="#6088b6" stroke-width="0.850"/><rect x="3.300" y="7.300" width="6.400" height="4.300" fill="none" stroke="#6088b6" stroke-width="0.850"/></svg>
<div class="pr" style="left:774px">打印本页面</div>
<div class="abs" style="left:830px;top:202px;width:1px;height:10.500px;background:#d2d2d2"></div>
<div class="pr" style="left:837px">人气1629</div>
<div class="sm" style="left:764px;top:227px">办理结果邮递</div>
<div class="sm" style="left:823px;top:227px">服务承诺到现场次数</div>
<div class="sm" style="left:909px;top:227px">承诺期限</div>
<div class="val" style="left:764px;top:241.800px">免费</div>
<div class="val" style="left:823px;top:241.800px">0<span style="color:#777;margin-left:3px">次</span></div>
<div class="val" style="left:909px;top:241.800px">即办</div>

<!-- ================= card 2 ================= -->
<div id="c2"></div>
<div class="vline"></div>
<div class="sd on" style="top:292px;padding-top:0.200px">基本信息</div>
<div class="sd" style="top:317.9px">受理条件</div>
<div class="sd" style="top:343.1px">申报材料</div>
<div class="sd" style="top:368.3px">办理流程</div>
<div class="sd" style="top:393.5px">窗口办理</div>
<div class="sd" style="top:418.7px">网上办理</div>
<div class="sd" style="top:443.9px">收费情况</div>
<div class="sd" style="top:469.1px">办理地点</div>

<div class="h3" style="left:227px;top:302.900px">基本信息</div>
<div class="abs" style="left:227px;top:319px;width:537px;height:1px;background:#e3e8ee"></div>

<!--TBL-->
<div class="abs" style="left:227px;top:328.5px;width:537px;height:1px;background:#dfe7f0"></div>
<div class="abs" style="left:227px;top:328.5px;width:1px;height:150px;background:#dfe7f0"></div>
<div class="tc l" style="left:227.5px;top:329px;width:119.5px;height:26px"><span>事项编码<span style="margin-left:1.500px">:</span></span></div>
<div class="tc v" style="left:347px;top:329px;width:146px;height:26px"><span>003831977GF08202</span></div>
<div class="tc l" style="left:493px;top:329px;width:119.5px;height:26px"><span>基本编码<span style="margin-left:1.500px">:</span></span></div>
<div class="tc v" style="left:612.5px;top:329px;width:146.5px;height:26px"><span>352017033000</span></div>
<div class="tc l" style="left:227.5px;top:355px;width:119.5px;height:37.5px"><span>实施编码<span style="margin-left:1.500px">:</span></span></div>
<div class="tc v" style="left:347px;top:355px;width:146px;height:37.5px"><span>11350582003831977W435201703<br>3000</span></div>
<div class="tc l" style="left:493px;top:355px;width:119.5px;height:37.5px"><span>业务办理项编码<span style="margin-left:1.500px">:</span></span></div>
<div class="tc v" style="left:612.5px;top:355px;width:146.5px;height:37.5px"><span>11350582003831977W435201703<br>300001</span></div>
<div class="tc l" style="left:227.5px;top:392.5px;width:119.5px;height:26.0px"><span>办件类型<span style="margin-left:1.500px">:</span></span></div>
<div class="tc v" style="left:347px;top:392.5px;width:146px;height:26.0px"><span>即办件</span></div>
<div class="tc l" style="left:493px;top:392.5px;width:119.5px;height:26.0px"><span>事项类型<span style="margin-left:1.500px">:</span></span></div>
<div class="tc v" style="left:612.5px;top:392.5px;width:146.5px;height:26.0px"><span>公共服务</span></div>
<div class="tc l" style="left:227.5px;top:418.5px;width:119.5px;height:25.5px"><span>行使层级<span style="margin-left:1.500px">:</span></span></div>
<div class="tc v" style="left:347px;top:418.5px;width:146px;height:25.5px"><span>县级</span></div>
<div class="tc l" style="left:493px;top:418.5px;width:119.5px;height:25.5px"><span>法定时限<span style="margin-left:1.500px">:</span></span></div>
<div class="tc v" style="left:612.5px;top:418.5px;width:146.5px;height:25.5px"><span>受理后1个工作日</span></div>
<div class="tc l" style="left:227.5px;top:444px;width:119.5px;height:25.5px"><span>承诺时限<span style="margin-left:1.500px">:</span></span></div>
<div class="tc v" style="left:347px;top:444px;width:146px;height:25.5px"><span>即办</span></div>
<div class="tc l" style="left:493px;top:444px;width:119.5px;height:25.5px"><span>实施主体<span style="margin-left:1.500px">:</span></span></div>
<div class="tc v" style="left:612.5px;top:444px;width:146.5px;height:25.5px"><span>晋江市住房和城乡建设局</span></div>
<div class="tc l" style="left:227.5px;top:469.5px;width:119.5px;height:25.5px"><span>办理形式<span style="margin-left:1.500px">:</span></span></div>
<div class="tc v" style="left:347px;top:469.5px;width:146px;height:25.5px"><span>窗口办理</span></div>
<div class="tc l" style="left:493px;top:469.5px;width:119.5px;height:25.5px"><span>联办机构<span style="margin-left:1.500px">:</span></span></div>
<div class="tc v" style="left:612.5px;top:469.5px;width:146.5px;height:25.5px"><span>无</span></div>
<div class="abs" style="left:759.300px;top:329px;width:4.800px;height:148px;background:#fafafa"></div><div class="abs" style="left:759.300px;top:329px;width:4.800px;height:90px;background:#dadada;border-radius:1px"></div>
<!--/TBL-->

<div class="bx" style="top:317px;height:73px"></div>
<svg class="abs" viewBox="0 0 13 13" style="left:787px;top:360.300px;width:13.500px;height:13.500px"><circle cx="6.500" cy="6.500" r="5.600" fill="none" stroke="#3f78b8" stroke-width="1"/><path d="M4 4.700h5M4 6.500h5M4 8.300h5" stroke="#3f78b8" stroke-width="0.900"/></svg>
<svg class="abs" viewBox="0.500 0.500 12 12" style="left:861.500px;top:360px;width:14px;height:14px"><path d="M11.500 6V1.500h-10v9h4.500" fill="none" stroke="#3f78b8" stroke-width="1"/><path d="M3.500 4h6" stroke="#3f78b8" stroke-width="0.900"/><circle cx="8.600" cy="8.600" r="2.300" fill="none" stroke="#3f78b8" stroke-width="1"/><path d="M10.300 10.300l1.700 1.700" stroke="#3f78b8" stroke-width="1"/></svg>


<div class="h3" style="left:788px;top:330px">办事评价</div>
<div class="it" style="left:806.300px;top:360.300px">事项评价</div>
<div class="it" style="left:881px;top:360.300px">查看评价</div>
<div class="bx" style="top:403px;height:73px"></div>
<svg class="abs" viewBox="0 0 13 13" style="left:787px;top:445.600px;width:13px;height:13px"><circle cx="6.500" cy="6.500" r="5.500" fill="none" stroke="#3aa66a" stroke-width="1.100"/><path d="M3.800 6.600l2 2 3.500-3.700" fill="none" stroke="#3aa66a" stroke-width="1.100"/></svg>
<svg class="abs" viewBox="0 0 13 13" style="left:861.800px;top:445.600px;width:13px;height:13px"><circle cx="6.500" cy="6.500" r="5.500" fill="none" stroke="#3aa66a" stroke-width="1.100"/><path d="M3.800 6.600l2 2 3.500-3.700" fill="none" stroke="#3aa66a" stroke-width="1.100"/></svg>
<div class="h3" style="left:788px;top:416px">纸质材料提交方式</div>
<div class="it" style="left:806.600px;top:445.800px">窗口收取</div>
<div class="it" style="left:881px;top:445.800px">邮递收取</div>

</div>
</body>
</html>
